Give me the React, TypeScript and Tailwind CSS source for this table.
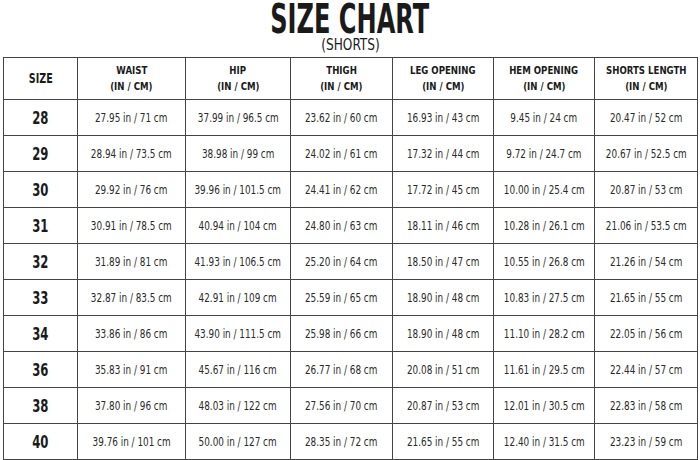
import React from 'react';

const rows: [string, string[]][] = [
  ['28', ['27.95 in / 71 cm', '37.99 in / 96.5 cm', '23.62 in / 60 cm', '16.93 in / 43 cm', '9.45 in / 24 cm', '20.47 in / 52 cm']],
  ['29', ['28.94 in / 73.5 cm', '38.98 in / 99 cm', '24.02 in / 61 cm', '17.32 in / 44 cm', '9.72 in / 24.7 cm', '20.67 in / 52.5 cm']],
  ['30', ['29.92 in / 76 cm', '39.96 in / 101.5 cm', '24.41 in / 62 cm', '17.72 in / 45 cm', '10.00 in / 25.4 cm', '20.87 in / 53 cm']],
  ['31', ['30.91 in / 78.5 cm', '40.94 in / 104 cm', '24.80 in / 63 cm', '18.11 in / 46 cm', '10.28 in / 26.1 cm', '21.06 in / 53.5 cm']],
  ['32', ['31.89 in / 81 cm', '41.93 in / 106.5 cm', '25.20 in / 64 cm', '18.50 in / 47 cm', '10.55 in / 26.8 cm', '21.26 in / 54 cm']],
  ['33', ['32.87 in / 83.5 cm', '42.91 in / 109 cm', '25.59 in / 65 cm', '18.90 in / 48 cm', '10.83 in / 27.5 cm', '21.65 in / 55 cm']],
  ['34', ['33.86 in / 86 cm', '43.90 in / 111.5 cm', '25.98 in / 66 cm', '18.90 in / 48 cm', '11.10 in / 28.2 cm', '22.05 in / 56 cm']],
  ['36', ['35.83 in / 91 cm', '45.67 in / 116 cm', '26.77 in / 68 cm', '20.08 in / 51 cm', '11.61 in / 29.5 cm', '22.44 in / 57 cm']],
  ['38', ['37.80 in / 96 cm', '48.03 in / 122 cm', '27.56 in / 70 cm', '20.87 in / 53 cm', '12.01 in / 30.5 cm', '22.83 in / 58 cm']],
  ['40', ['39.76 in / 101 cm', '50.00 in / 127 cm', '28.35 in / 72 cm', '21.65 in / 55 cm', '12.40 in / 31.5 cm', '23.23 in / 59 cm']],
];

const headers = ['WAIST', 'HIP', 'THIGH', 'LEG OPENING', 'HEM OPENING', 'SHORTS LENGTH'];
const widths = ['w-[74px]', 'w-[108px]', 'w-[105px]', 'w-[102px]', 'w-[101px]', 'w-[101px]', 'w-[103px]'];

export default function App() {
  return (
    <div className="w-[700px] h-[460px] bg-white overflow-hidden font-['DejaVu_Sans_Condensed','DejaVu_Sans',sans-serif] text-[#1a1a1a]">
      <div className="flex flex-col items-center">
        <h1 className="text-[40px] leading-[39px] font-bold whitespace-nowrap scale-x-[0.67]">SIZE CHART</h1>
        <p className="text-[15px] leading-[12px] whitespace-nowrap scale-x-[0.9]">(SHORTS)</p>
      </div>
      <table className="ml-[3px] mt-[6px] border-collapse table-fixed w-[694px]">
        <colgroup>
          {widths.map((w, i) => (
            <col key={i} className={w} />
          ))}
        </colgroup>
        <thead>
          <tr className="h-[42px]">
            <th className="border border-[#444]">
              <div className="flex justify-center">
                <span className="inline-block text-[14px] font-bold whitespace-nowrap scale-x-[0.76]">SIZE</span>
              </div>
            </th>
            {headers.map((h) => (
              <th key={h} className="border border-[#444]">
                <div className="flex flex-col items-center text-[11px] font-bold leading-[16px] whitespace-nowrap">
                  <span className="scale-x-[0.87]">{h}</span>
                  <span className="scale-x-[0.87]">(IN / CM)</span>
                </div>
              </th>
            ))}
          </tr>
        </thead>
        <tbody>
          {rows.map(([size, vals]) => (
            <tr key={size} className="h-[36px]">
              <td className="border border-[#444]">
                <div className="flex justify-center">
                  <span className="inline-block text-[18px] font-bold whitespace-nowrap scale-x-[0.72]">{size}</span>
                </div>
              </td>
              {vals.map((v, i) => (
                <td key={i} className="border border-[#444]">
                  <div className="flex justify-center">
                    <span className="inline-block text-[12px] text-[#2a2a2a] whitespace-nowrap scale-x-[0.82]">{v}</span>
                  </div>
                </td>
              ))}
            </tr>
          ))}
        </tbody>
      </table>
    </div>
  );
}
